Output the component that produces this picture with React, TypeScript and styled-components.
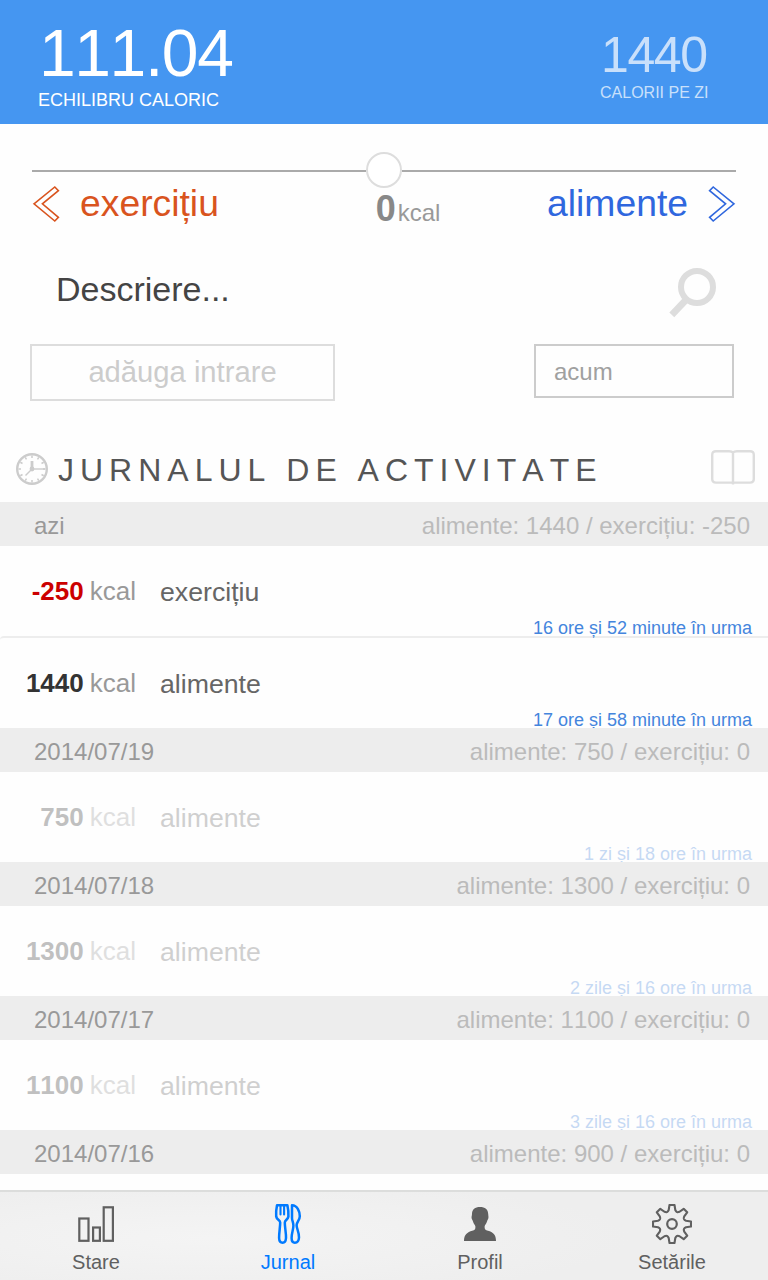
import React from "react";
import styled, { createGlobalStyle } from "styled-components";

const GlobalStyle = createGlobalStyle`
  * { box-sizing: border-box; }
  body {
    margin: 0;
    background: #fff;
    font-family: "Liberation Sans", Arial, Helvetica, sans-serif;
  }
`;

const Screen = styled.div`
  width: 768px;
  height: 1280px;
  display: flex;
  flex-direction: column;
  overflow: hidden;
  background: #fefefe;
`;

const Header = styled.header`
  flex: none;
  height: 124px;
  display: flex;
  justify-content: space-between;
  padding: 21px 60px 0 38px;
  background: #4596f1;
  color: #fff;
`;

const Stat = styled.div<{ $muted?: boolean }>`
  width: ${(p) => (p.$muted ? "108px" : "auto")};
  padding-top: ${(p) => (p.$muted ? 9 : 0)}px;
  color: ${(p) => (p.$muted ? "#c9e0fb" : "#fff")};
  white-space: nowrap;
`;

const StatValue = styled.div<{ $size: number; $line: number }>`
  margin-left: 1px;
  font-size: ${(p) => p.$size}px;
  line-height: ${(p) => p.$line}px;
  letter-spacing: -1.4px;
  font-kerning: none;
`;

const StatLabel = styled.div<{ $size: number; $gap: number }>`
  margin-top: ${(p) => p.$gap}px;
  font-size: ${(p) => p.$size}px;
  line-height: 20px;
`;

const Slider = styled.section`
  flex: none;
  height: 126px;
  padding: 28px 32px 0;
`;

const Track = styled.div`
  height: 36px;
  display: flex;
  align-items: center;
`;

const Rail = styled.div`
  flex: 1;
  height: 2px;
  margin-top: 2px;
  background: #aaa;
`;

const Knob = styled.div`
  width: 36px;
  height: 36px;
  border: 2px solid #ddd;
  border-radius: 50%;
  background: #fff;
`;

const SliderLabels = styled.div`
  display: grid;
  grid-template-columns: 1fr auto 1fr;
  height: 50px;
`;

const Direction = styled.div<{ $color: string; $end?: boolean }>`
  display: flex;
  align-items: flex-start;
  justify-content: ${(p) => (p.$end ? "flex-end" : "flex-start")};
  gap: 20px;
  color: ${(p) => p.$color};
  font-size: 37.3px;
  line-height: 30px;

  svg { display: block; margin-top: -3px; }
`;

const Amount = styled.div`
  display: flex;
  align-items: baseline;
  gap: 2px;
  padding-left: 48px;
  color: #999;
  font-size: 24px;
  line-height: 41px;

  strong { font-size: 36px; color: #888; }
`;

const Form = styled.section`
  flex: none;
  height: 190px;
  padding: 16px 34px 0 30px;
`;

const DescriptionRow = styled.div`
  height: 78px;
  display: flex;
  justify-content: space-between;
  padding: 0 16px 0 26px;
  color: #444;
  font-size: 34px;
  line-height: 46px;
`;

const ButtonRow = styled.div`
  display: flex;
  justify-content: space-between;
  align-items: flex-start;
`;

const AddButton = styled.button`
  width: 305px;
  height: 57px;
  padding: 0;
  border: 2px solid #ddd;
  background: transparent;
  color: #ccc;
  font-family: inherit;
  font-size: 29.2px;
  line-height: 51px;
`;

const TimeField = styled.div`
  width: 200px;
  height: 54px;
  padding-left: 18px;
  border: 2px solid #ccc;
  color: #a0a0a0;
  font-size: 24px;
  line-height: 51px;
`;

const JournalHead = styled.div`
  flex: none;
  height: 62px;
  display: flex;
  align-items: flex-start;
  padding: 9px 13px 0 16px;

  svg { flex: none; display: block; }
`;

const Title = styled.h1`
  flex: 1;
  margin: 0 0 0 10px;
  color: #555;
  font-size: 32px;
  font-weight: 400;
  font-kerning: none;
  letter-spacing: 6px;
  line-height: 42px;
  white-space: nowrap;
`;

const List = styled.main`
  flex: 1;
  min-height: 0;
  overflow: hidden;
`;

const DayHeader = styled.div`
  position: relative;
  z-index: 1;
  height: 44px;
  display: flex;
  justify-content: space-between;
  padding: 0 18px 0 34px;
  background: #ededed;
  color: #999;
  font-size: 24px;
  line-height: 48px;
  font-kerning: none;
`;

const Summary = styled.span`
  color: #bbb;
`;

const Entry = styled.div`
  height: 90px;
  display: flex;
  flex-direction: column;
  padding: 29px 16px 0 0;

  & + & {
    height: 92px;
    border-top: 2px solid #ededed;
    border-top-left-radius: 4px;
  }
`;

const EntryLine = styled.div<{ $faded?: boolean }>`
  flex: none;
  height: 44px;
  display: flex;
  opacity: ${(p) => (p.$faded ? 0.3 : 1)};
  line-height: 32px;
`;

const Calories = styled.div<{ $negative?: boolean }>`
  width: 136px;
  display: flex;
  justify-content: flex-end;
  gap: 6px;
  font-size: 26px;
  font-kerning: none;
  color: #999;

  strong { color: ${(p) => (p.$negative ? "#c00" : "#333")}; }
`;

const EntryName = styled.div`
  margin-left: 24px;
  padding-top: 1px;
  font-size: 26.7px;
  color: #666;
`;

const Ago = styled.div<{ $faded?: boolean }>`
  flex: none;
  text-align: right;
  color: #4485dd;
  font-size: 18px;
  line-height: 18px;
  opacity: ${(p) => (p.$faded ? 0.3 : 1)};
`;

const Nav = styled.nav`
  flex: none;
  height: 90px;
  display: grid;
  grid-template-columns: repeat(4, 1fr);
  border-top: 2px solid #dcdddc;
  background: radial-gradient(ellipse 420px 60px at 210px 46px, #f4f4f4, #eee);
`;

const NavItem = styled.div<{ $active?: boolean }>`
  display: flex;
  flex-direction: column;
  align-items: center;
  padding-top: 12px;
  color: ${(p) => (p.$active ? "#007aff" : "#606060")};
  font-size: 20px;
  line-height: 24px;

  svg { display: block; margin-bottom: 6px; }
`;

const Chevron = ({ flip }: { flip?: boolean }) => (
  <svg width="28" height="38" viewBox="0 0 28 38" fill="none" stroke="currentColor" strokeWidth="1.6">
    <path
      transform={flip ? "matrix(-1 0 0 1 28 0)" : undefined}
      d="M2 18.8 L22.8 2 L26.4 5.6 L10.4 18.8 L26.4 32.4 L22.8 36 Z"
    />
  </svg>
);

const SearchIcon = () => (
  <svg width="50" height="52" viewBox="0 0 50 52" fill="none" stroke="#ddd">
    <circle cx="29" cy="21" r="16" strokeWidth="6" />
    <path d="M18.5 33.3 L3.8 48.8" strokeWidth="6.8" />
  </svg>
);

const ClockSvg = styled.svg`
  margin-top: 4px;
`;

const ClockIcon = () => (
  <ClockSvg width="32" height="32" viewBox="0 0 32 32" fill="none" stroke="#ccc">
    <circle cx="16" cy="16" r="14.8" strokeWidth="2.4" />
    {Array.from({ length: 12 }, (_, i) => (
      <path key={i} d="M16 2.5 V5" strokeWidth="1.5" transform={`rotate(${i * 30} 16 16)`} />
    ))}
    <path d="M16 16 V8" strokeWidth="2.8" />
    <path d="M16 16 H29" strokeWidth="1.4" />
    <path d="M16 16 L9.5 22.5" strokeWidth="1.4" />
    <circle cx="16" cy="16" r="2.4" fill="#ccc" stroke="none" />
  </ClockSvg>
);

const BookSvg = styled.svg`
  margin-top: 1px;
`;

const BookIcon = () => (
  <BookSvg width="44" height="36" viewBox="0 0 44 36" fill="none" stroke="#ddd" strokeWidth="2.4">
    <path d="M22 2.4 Q21 1.2 18 1.2 H5 Q1.2 1.2 1.2 5 V29 Q1.2 32.6 5 32.6 H39 Q42.8 32.6 42.8 29 V5 Q42.8 1.2 39 1.2 H26 Q23 1.2 22 2.4 V34.6" />
  </BookSvg>
);

const BarsIcon = () => (
  <svg width="40" height="40" viewBox="0 0 40 40" fill="none" stroke="currentColor" strokeWidth="2.2">
    <rect x="3.3" y="14.5" width="9.2" height="22.3" />
    <rect x="17.1" y="23.5" width="6.8" height="13.3" />
    <rect x="27.7" y="3.3" width="9.2" height="33.5" />
  </svg>
);

const CutleryIcon = () => (
  <svg width="40" height="40" viewBox="0 0 40 40" fill="none" stroke="currentColor" strokeWidth="2.5" strokeLinejoin="round" strokeLinecap="round">
    <path d="M9 1.3 H19.4 C20.2 5 20.6 9 20.4 12.5 C20 15.5 17 16 16.8 18.5 C16.7 23 18.2 29 18 34 C17.8 37.3 16.4 38.7 14.6 38.7 C12.8 38.7 11.2 37.3 11.1 34 C11 29 12.2 23 12.2 18.5 C12 16 8.6 15.5 8.2 12.5 C8 9 8.2 5 9 1.3 Z" />
    <path d="M12.5 2 V10.4 M16.1 2 V10.4" strokeWidth="2.1" />
    <path d="M24 1.3 C29.5 1.3 31.8 8 31.8 12.2 C31.8 16 28.8 17.8 28.6 21 C28.5 25 31.2 28 31 33.5 C30.8 37.3 29 38.7 26.9 38.7 C24.8 38.7 23.6 37.3 23.6 34 C23.6 29 25.4 25.5 25.4 21.5 C25.4 18 24 17 24 14 Z" />
  </svg>
);

const PersonIcon = () => (
  <svg width="40" height="40" viewBox="0 0 40 40" fill="currentColor">
    <path d="M20 3 C25 3 28.2 5.4 28.2 10 C28.2 11.4 28.7 12.4 28.4 14 C28.1 15.6 27.4 15.8 27 17.4 C26.4 19.6 24.9 20.6 24.6 22.4 C24.4 25.2 25.4 26 28 26.8 C33 28.2 36 30.6 36 37 H4 C4 30.6 7.4 28.2 12.2 26.8 C14.8 26 15.6 25.2 15.4 22.4 C15.1 20.6 13.5 19.6 13 17.4 C12.6 15.8 11.8 15.6 11.6 14 C11.4 12.4 12 11.4 12 10 C12 5.4 15 3 20 3 Z" />
  </svg>
);

// Eight tapered teeth joined by shallow scooped valleys.
const gearPath = (() => {
  const at = (x: number, y: number, i: number) => {
    const a = (i * Math.PI) / 4;
    const px = 20 + x * Math.cos(a) - y * Math.sin(a);
    const py = 20 + x * Math.sin(a) + y * Math.cos(a);
    return `${px.toFixed(2)} ${py.toFixed(2)}`;
  };
  let d = "";
  for (let i = 0; i < 8; i++) {
    d += `${i ? "L" : "M"}${at(-3.3, -14, i)} L${at(-2.5, -19, i)} L${at(2.5, -19, i)} L${at(3.3, -14, i)} `;
    d += `Q${at(4, -12.4, i)} ${at(4.9, -12, i)} L${at(-4.9, -12, i + 1)} Q${at(-4, -12.4, i + 1)} ${at(-3.3, -14, i + 1)} `;
  }
  return d + "Z";
})();

const GearIcon = () => (
  <svg width="40" height="40" viewBox="0 0 40 40" fill="none" stroke="currentColor" strokeWidth="2.1" strokeLinejoin="round">
    <path d={gearPath} />
    <circle cx="20" cy="20" r="4.8" strokeWidth="2.2" />
  </svg>
);

interface Item {
  kcal: number;
  name: string;
  ago: string;
}

interface Day {
  label: string;
  food: number;
  exercise: number;
  past?: boolean;
  items: Item[];
}

const days: Day[] = [
  {
    label: "azi",
    food: 1440,
    exercise: -250,
    items: [
      { kcal: -250, name: "exercițiu", ago: "16 ore și 52 minute în urma" },
      { kcal: 1440, name: "alimente", ago: "17 ore și 58 minute în urma" },
    ],
  },
  { label: "2014/07/19", food: 750, exercise: 0, past: true, items: [{ kcal: 750, name: "alimente", ago: "1 zi și 18 ore în urma" }] },
  { label: "2014/07/18", food: 1300, exercise: 0, past: true, items: [{ kcal: 1300, name: "alimente", ago: "2 zile și 16 ore în urma" }] },
  { label: "2014/07/17", food: 1100, exercise: 0, past: true, items: [{ kcal: 1100, name: "alimente", ago: "3 zile și 16 ore în urma" }] },
  { label: "2014/07/16", food: 900, exercise: 0, past: true, items: [] },
];

export default function App() {
  return (
    <Screen>
      <GlobalStyle />
      <Header>
        <Stat>
          <StatValue $size={66} $line={64}>111.04</StatValue>
          <StatLabel $size={18} $gap={5}>ECHILIBRU CALORIC</StatLabel>
        </Stat>
        <Stat $muted>
          <StatValue $size={50} $line={50}>1440</StatValue>
          <StatLabel $size={16} $gap={3}>CALORII PE ZI</StatLabel>
        </Stat>
      </Header>

      <Slider>
        <Track>
          <Rail />
          <Knob />
          <Rail />
        </Track>
        <SliderLabels>
          <Direction $color="#d9541e">
            <Chevron />
            <span>exercițiu</span>
          </Direction>
          <Amount>
            <strong>0</strong>
            <span>kcal</span>
          </Amount>
          <Direction $color="#2f67de" $end>
            <span>alimente</span>
            <Chevron flip />
          </Direction>
        </SliderLabels>
      </Slider>

      <Form>
        <DescriptionRow>
          <span>Descriere...</span>
          <SearchIcon />
        </DescriptionRow>
        <ButtonRow>
          <AddButton>adăuga intrare</AddButton>
          <TimeField>acum</TimeField>
        </ButtonRow>
      </Form>

      <JournalHead>
        <ClockIcon />
        <Title>JURNALUL DE ACTIVITATE</Title>
        <BookIcon />
      </JournalHead>

      <List>
        {days.map((day) => (
          <React.Fragment key={day.label}>
            <DayHeader>
              <span>{day.label}</span>
              <Summary>{`alimente: ${day.food} / exercițiu: ${day.exercise}`}</Summary>
            </DayHeader>
            {day.items.map((item) => (
              <Entry key={item.ago}>
                <EntryLine $faded={day.past}>
                  <Calories $negative={item.kcal < 0}>
                    <strong>{item.kcal}</strong>
                    <span>kcal</span>
                  </Calories>
                  <EntryName>{item.name}</EntryName>
                </EntryLine>
                <Ago $faded={day.past}>{item.ago}</Ago>
              </Entry>
            ))}
          </React.Fragment>
        ))}
      </List>

      <Nav>
        <NavItem>
          <BarsIcon />
          Stare
        </NavItem>
        <NavItem $active>
          <CutleryIcon />
          Jurnal
        </NavItem>
        <NavItem>
          <PersonIcon />
          Profil
        </NavItem>
        <NavItem>
          <GearIcon />
          Setările
        </NavItem>
      </Nav>
    </Screen>
  );
}
